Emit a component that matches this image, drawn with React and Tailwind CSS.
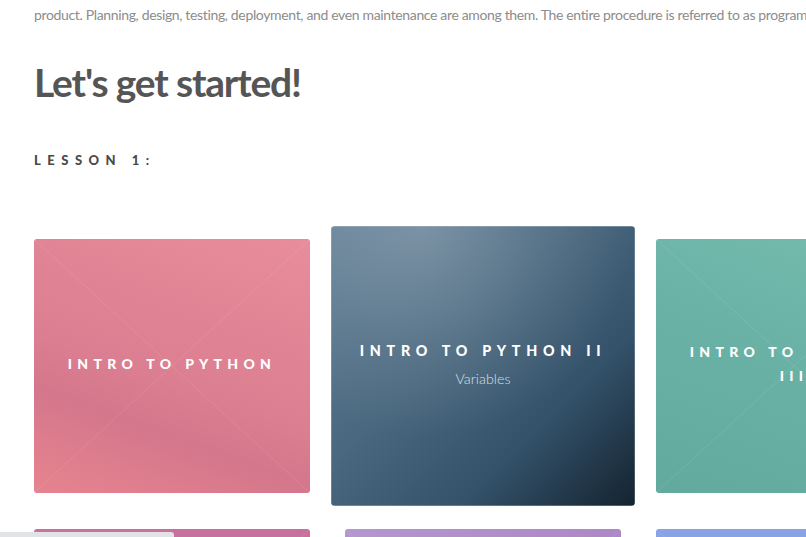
import React from 'react';

const XLines = () => (
  <svg className="absolute inset-0 w-full h-full" viewBox="0 0 100 100" preserveAspectRatio="none">
    <line x1="0" y1="0" x2="100" y2="100" stroke="white" strokeOpacity="0.28" strokeWidth="0.35" vectorEffect="non-scaling-stroke" />
    <line x1="100" y1="0" x2="0" y2="100" stroke="white" strokeOpacity="0.28" strokeWidth="0.35" vectorEffect="non-scaling-stroke" />
  </svg>
);

const cards = [
  { title: 'INTRO TO PYTHON', bg: 'bg-[linear-gradient(200deg,#e88d9b_0%,#db7e91_55%,#d4778c_70%,#e7838f_100%)]', x: true },
  { title: 'INTRO TO PYTHON II', sub: 'Variables', hover: true },
  { title: 'INTRO TO PYTHON III', bg: 'bg-[linear-gradient(200deg,#77bdb0_0%,#6ab2a6_45%,#63aa9e_100%)]', x: true },
  { title: '', bg: 'bg-[#c8719e]', x: true },
  { title: '', bg: 'bg-[linear-gradient(90deg,#b496d0,#ad88c6)]', x: true },
  { title: '', bg: 'bg-[#8aa2e6]', x: true },
];

const Card = ({ card }) => {
  if (card.hover) {
    return (
      <div className="relative z-10 h-[254px] w-[276px] scale-110 overflow-hidden rounded-[3px] bg-[linear-gradient(135deg,#5f7c93_0%,#4a687f_40%,#34526a_70%,#142330_100%)]">
        <div className="absolute inset-0 bg-[radial-gradient(circle_at_30%_0%,rgba(255,255,255,0.22),rgba(255,255,255,0.08)_35%,transparent_60%)]" />
        <div className="relative flex h-full flex-col items-center justify-center px-[8px] pb-[2px] text-center">
          <div className="whitespace-nowrap font-['Lato',sans-serif] text-[13px] font-black leading-[20px] tracking-[0.4em] text-white">{card.title}</div>
          <div className="mt-[6px] font-['Lato',sans-serif] text-[13px] font-light text-[#d6e0e8]">{card.sub}</div>
        </div>
      </div>
    );
  }
  return (
    <div className={`relative h-[254px] w-[276px] overflow-hidden rounded-[3px] ${card.bg}`}>
      {card.x && <XLines />}
      <div className="relative flex h-full flex-col items-center justify-center px-[30px] pb-[4px] text-center">
        <div className="font-['Lato',sans-serif] text-[14px] font-black leading-[24px] tracking-[0.38em] text-white">{card.title}</div>
      </div>
    </div>
  );
}

export default function App() {
  return (
    <div className="relative h-[537px] w-[806px] overflow-hidden bg-white">
      <div className="pl-[34px]">
        <p className="mt-[5px] whitespace-nowrap font-['Lato',sans-serif] text-[14px] leading-[20px] tracking-[-0.025em] text-[#8c8c8c]">
          product. Planning, design, testing, deployment, and even maintenance are among them. The entire procedure is referred to as programming.
        </p>
        <h1 className="mt-[34px] font-['Lato',sans-serif] text-[39px] font-bold leading-[46px] tracking-[-0.03em] text-[#555555]">
          Let's get started!
        </h1>
        <h2 className="mt-[46px] font-['Lato',sans-serif] text-[13px] font-black leading-[18px] tracking-[0.5em] text-[#4a4a4a]">
          LESSON 1:
        </h2>
        <div className="mt-[70px] grid w-max grid-cols-[276px_276px_276px] gap-x-[35px] gap-y-[36px]">
          {cards.map((c, i) => (
            <Card key={i} card={c} />
          ))}
        </div>
      </div>
      <div className="absolute bottom-0 left-0 h-[5px] w-[174px] rounded-tr-[3px] bg-[#e1e3e6]" />
    </div>
  );
}
